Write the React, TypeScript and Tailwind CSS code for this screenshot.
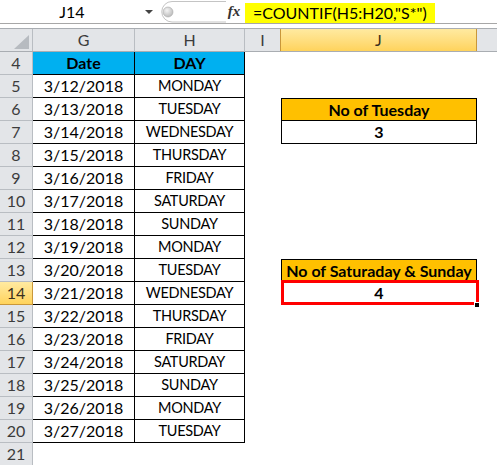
const font = { fontFamily: 'Lato, "Liberation Sans", sans-serif' };

const data: [string, string][] = [
  ['3/12/2018', 'MONDAY'],
  ['3/13/2018', 'TUESDAY'],
  ['3/14/2018', 'WEDNESDAY'],
  ['3/15/2018', 'THURSDAY'],
  ['3/16/2018', 'FRIDAY'],
  ['3/17/2018', 'SATURDAY'],
  ['3/18/2018', 'SUNDAY'],
  ['3/19/2018', 'MONDAY'],
  ['3/20/2018', 'TUESDAY'],
  ['3/21/2018', 'WEDNESDAY'],
  ['3/22/2018', 'THURSDAY'],
  ['3/23/2018', 'FRIDAY'],
  ['3/24/2018', 'SATURDAY'],
  ['3/25/2018', 'SUNDAY'],
  ['3/26/2018', 'MONDAY'],
  ['3/27/2018', 'TUESDAY'],
];

function RowHead({ n, active }: { n: number; active?: boolean }) {
  return (
    <div
      className={`w-[33px] shrink-0 flex items-center justify-center border-r border-b text-[16px] ${
        active
          ? 'bg-gradient-to-b from-[#ffeaa0] to-[#ffd35b] border-[#c9973a] text-[#3a3020]'
          : 'bg-[#e3e5e8] border-[#b9bdc2] text-[#3c3c3c]'
      }`}
    >
      {n}
    </div>
  );
}

function JCell({ row }: { row: number }) {
  if (row === 6 || row === 13) {
    return (
      <div className="w-[196px] shrink-0 flex items-center justify-center bg-[#ffc000] border border-black font-bold text-[16px] text-black">
        {row === 6 ? 'No of Tuesday' : 'No of Saturaday & Sunday'}
      </div>
    );
  }
  if (row === 7 || row === 14) {
    return (
      <div className="relative w-[196px] shrink-0 flex items-center justify-center border-x border-b border-black font-bold text-[16px] text-black">
        {row === 7 ? '3' : '4'}
        {row === 14 && (
          <>
            <div className="absolute left-[-1px] top-[-2px] w-[198px] h-[25px] border-[3px] border-[#ff0000]" />
            <div className="absolute right-[-4px] bottom-[-4px] w-[6px] h-[6px] bg-black border border-white" />
          </>
        )}
      </div>
    );
  }
  return <div className="w-[196px] shrink-0" />;
}

export default function App() {
  return (
    <div className="w-[497px] h-[465px] overflow-hidden bg-white text-black" style={font}>
      {/* formula bar */}
      <div className="h-[24px] flex border-b border-[#a7a7a7]">
        <div className="w-[142px] shrink-0 flex items-center justify-center pl-[2px] text-[16px]">J14</div>
        <div className="w-[14px] shrink-0 flex items-center justify-center">
          <div className="w-0 h-0 border-l-[4px] border-r-[4px] border-t-[4px] border-l-transparent border-r-transparent border-t-[#444]" />
        </div>
        <svg width="70" height="23" viewBox="0 0 70 23" className="shrink-0">
          <defs>
            <radialGradient id="knob" cx="0.4" cy="0.35" r="0.7">
              <stop offset="0" stopColor="#f4f4f4" />
              <stop offset="1" stopColor="#b8b8b8" />
            </radialGradient>
          </defs>
          <path d="M16 1.5 H70 M16 22 H70 M16 1.5 A10.25 10.25 0 0 0 16 22" fill="none" stroke="#c4c4c4" />
          <circle cx="12" cy="12" r="5" fill="url(#knob)" stroke="#a9a9a9" strokeWidth="0.6" />
        </svg>
        <div
          className="w-[16px] shrink-0 flex items-center justify-center italic font-bold text-[15px] text-[#333]"
          style={{ fontFamily: '"Liberation Serif", serif' }}
        >
          fx
        </div>
        <div className="flex-1 flex items-stretch pl-[3px] pt-[3px]">
          <div className="bg-[#ffff00] px-[8px] flex items-center text-[16px]">=COUNTIF(H5:H20,"S*")</div>
        </div>
      </div>
      <div className="h-[4px]" />

      {/* column headers */}
      <div className="h-[24px] flex border-t border-b border-[#a9adb2] bg-[#e3e5e8] text-[16px] text-[#3c3c3c]">
        <div className="w-[33px] shrink-0 border-r border-[#b9bdc2] flex items-end justify-end pr-[3px] pb-[2px]">
          <svg width="15" height="14" viewBox="0 0 15 14">
            <polygon points="15,0 15,14 0,14" fill="#b7bbc0" />
          </svg>
        </div>
        <div className="w-[102px] shrink-0 border-r border-[#b9bdc2] flex items-center justify-center">G</div>
        <div className="w-[110px] shrink-0 border-r border-[#b9bdc2] flex items-center justify-center">H</div>
        <div className="w-[36px] shrink-0 border-r border-[#c9973a] flex items-center justify-center">I</div>
        <div className="w-[196px] shrink-0 bg-gradient-to-b from-[#ffeaa0] to-[#ffd35b] border-r border-[#c9973a] flex items-center justify-center text-[#3a3020]">
          J
        </div>
        <div className="flex-1" />
      </div>

      {/* row 4 */}
      <div className="h-[23px] flex">
        <RowHead n={4} />
        <div className="w-[102px] shrink-0 bg-[#00b0f0] border-r border-b border-black flex items-center justify-center font-bold text-[16px]">
          Date
        </div>
        <div className="w-[110px] shrink-0 bg-[#00b0f0] border-r border-b border-black flex items-center justify-center font-bold text-[16px]">
          DAY
        </div>
        <div className="w-[36px] shrink-0" />
        <JCell row={4} />
      </div>

      {data.map(([d, day], i) => {
        const row = i + 5;
        return (
          <div key={row} className="h-[23px] flex">
            <RowHead n={row} active={row === 14} />
            <div className="w-[102px] shrink-0 border-r border-b border-black flex items-center justify-center text-[16px]">
              {d}
            </div>
            <div className="w-[110px] shrink-0 border-r border-b border-black flex items-center justify-center text-[14.5px] tracking-[-0.3px]">
              {day}
            </div>
            <div className="w-[36px] shrink-0" />
            <JCell row={row} />
          </div>
        );
      })}

      <div className="h-[23px] flex">
        <RowHead n={21} />
      </div>
    </div>
  );
}
